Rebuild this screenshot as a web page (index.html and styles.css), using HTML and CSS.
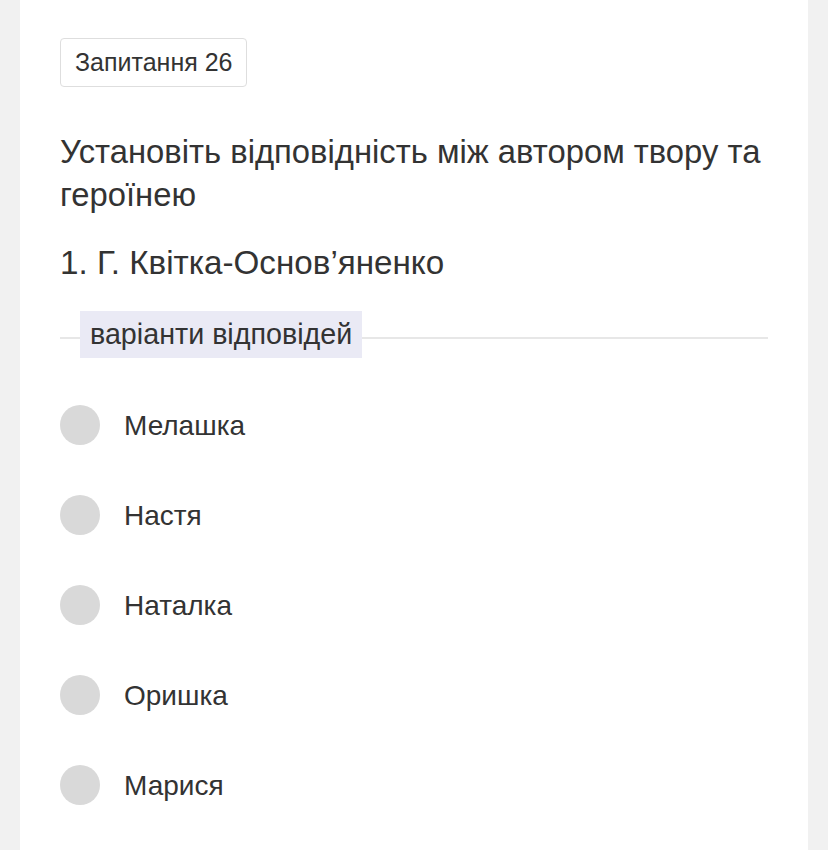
FILE: index.html
```html
<!DOCTYPE html>
<html lang="uk">
<head>
<meta charset="utf-8">
<title>Запитання 26</title>
<link rel="stylesheet" href="styles.css">
</head>
<body>
<main class="card">
  <div class="badge">Запитання 26</div>
  <h1 class="title">Установіть відповідність між автором твору та героїнею</h1>
  <p class="question">1. Г. Квітка-Основ’яненко</p>
  <div class="legend-row"><span class="legend">варіанти відповідей</span></div>
  <ul class="options">
    <li class="option"><span class="radio"></span><span class="option-text">Мелашка</span></li>
    <li class="option"><span class="radio"></span><span class="option-text">Настя</span></li>
    <li class="option"><span class="radio"></span><span class="option-text">Наталка</span></li>
    <li class="option"><span class="radio"></span><span class="option-text">Оришка</span></li>
    <li class="option"><span class="radio"></span><span class="option-text">Марися</span></li>
  </ul>
</main>
</body>
</html>
```
FILE: styles.css
```css
html, body {
  margin: 0;
  padding: 0;
}
body {
  background: #f1f1f1;
  font-family: "Liberation Sans", Arial, Helvetica, sans-serif;
  color: #333333;
}
.card {
  margin: 0 20px;
  background: #ffffff;
  padding: 38px 40px 0;
  min-height: 850px;
  box-sizing: border-box;
}
.badge {
  display: inline-block;
  box-sizing: border-box;
  height: 49px;
  line-height: 47px;
  padding: 0 14px;
  border: 1.5px solid #dedede;
  border-radius: 4px;
  font-size: 25px;
}
.title {
  margin: 43px 0 0;
  font-size: 32.8px;
  line-height: 43px;
  font-weight: normal;
}
.question {
  margin: 27px 0 0;
  font-size: 33.2px;
  line-height: 40px;
}
.legend-row {
  margin-top: 28px;
  display: flex;
  align-items: flex-start;
}
.legend-row::before,
.legend-row::after {
  content: "";
  height: 2px;
  margin-top: 26px;
  background: #e7e7e7;
}
.legend-row::before {
  width: 20px;
}
.legend-row::after {
  flex: 1;
}
.legend {
  background: #eaeaf5;
  font-size: 28.7px;
  line-height: 47px;
  padding: 0 10px;
}
.options {
  list-style: none;
  margin: 47px 0 0;
  padding: 0;
  display: flex;
  flex-direction: column;
  gap: 50px;
}
.option {
  display: flex;
  align-items: center;
  gap: 24px;
  height: 40px;
}
.radio {
  width: 40px;
  height: 40px;
  border-radius: 50%;
  background: #d9d9d9;
  flex: none;
}
.option-text {
  font-size: 28px;
  line-height: 40px;
  padding-top: 2px;
}
```
